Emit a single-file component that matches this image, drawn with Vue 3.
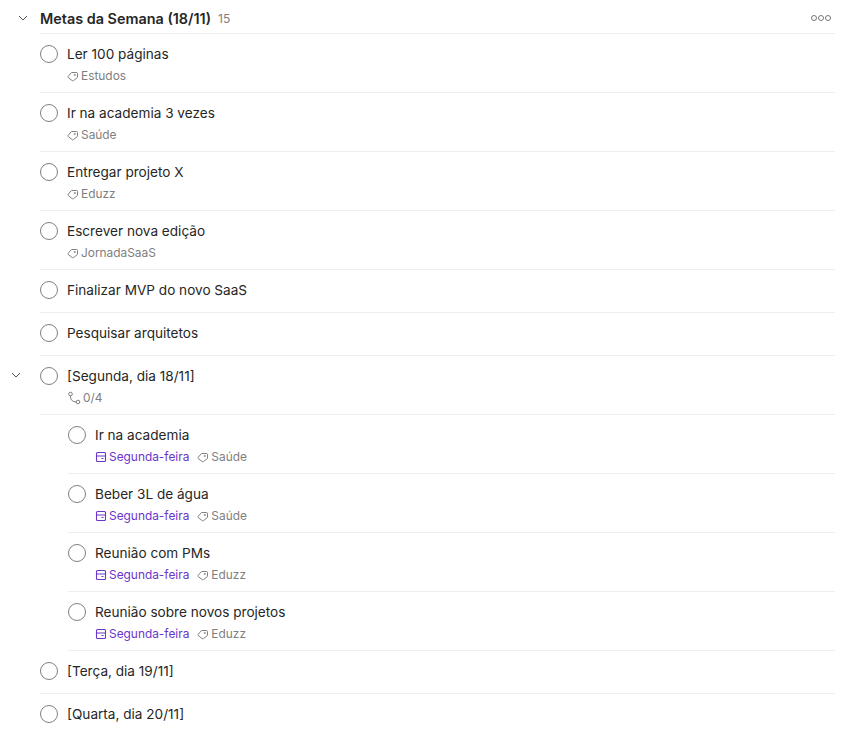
<script setup>
const tasks = [
  { title: 'Ler 100 páginas', tag: 'Estudos' },
  { title: 'Ir na academia 3 vezes', tag: 'Saúde' },
  { title: 'Entregar projeto X', tag: 'Eduzz' },
  { title: 'Escrever nova edição', tag: 'JornadaSaaS' },
  { title: 'Finalizar MVP do novo SaaS' },
  { title: 'Pesquisar arquitetos' },
  { title: '[Segunda, dia 18/11]', sub: '0/4', open: true },
  { title: 'Ir na academia', tag: 'Saúde', day: 'Segunda-feira', child: true },
  { title: 'Beber 3L de água', tag: 'Saúde', day: 'Segunda-feira', child: true },
  { title: 'Reunião com PMs', tag: 'Eduzz', day: 'Segunda-feira', child: true },
  { title: 'Reunião sobre novos projetos', tag: 'Eduzz', day: 'Segunda-feira', child: true },
  { title: '[Terça, dia 19/11]' },
  { title: '[Quarta, dia 20/11]' }
]
</script>

<template>
  <div class="page">
    <header class="head">
      <svg class="chev head-chev" width="12" height="12" viewBox="0 0 12 12"><path d="M2 4 6 8l4-4" /></svg>
      <span class="head-title">Metas da Semana (18/11)</span>
      <span class="head-count">15</span>
      <span class="more">
        <i></i><i></i><i></i>
      </span>
    </header>
    <ul class="list">
      <li v-for="t in tasks" :key="t.title" class="task" :class="{ child: t.child }">
        <svg v-if="t.open" class="chev task-chev" width="12" height="12" viewBox="0 0 12 12"><path d="M2 4 6 8l4-4" /></svg>
        <span class="check"></span>
        <div class="body">
          <div class="title">{{ t.title }}</div>
          <div v-if="t.tag || t.sub" class="meta">
            <span v-if="t.day" class="chip day">
              <svg width="12" height="12" viewBox="0 0 12 12" fill="none" stroke="currentColor" stroke-width="1.1">
                <rect x="1.5" y="1.5" width="9" height="9" rx="1" />
                <path d="M1.5 5h9M6.5 7.5h2" />
              </svg>
              {{ t.day }}
            </span>
            <span v-if="t.tag" class="chip tag">
              <svg width="12" height="12" viewBox="0 0 12 12" fill="none" stroke="currentColor" stroke-width="1">
                <path d="M1.2 6.3 4.2 2.8a1 1 0 0 1 .8-.3h4.5a1 1 0 0 1 1 1V7a1 1 0 0 1-.4.8L6.5 10.6a1 1 0 0 1-1.3 0L1.3 7.6a1 1 0 0 1-.1-1.3z" />
                <circle cx="7.8" cy="5" r=".6" />
              </svg>
              {{ t.tag }}
            </span>
            <span v-if="t.sub" class="chip sub">
              <svg width="14" height="14" viewBox="0 0 14 14" fill="none" stroke="currentColor" stroke-width="1">
                <circle cx="3.5" cy="3" r="1.8" />
                <circle cx="11" cy="11" r="1.8" />
                <path d="M3.5 4.8V6c0 3 2.5 5 5.7 5" />
              </svg>
              {{ t.sub }}
            </span>
          </div>
        </div>
      </li>
    </ul>
  </div>
</template>

<style>
html, body { margin: 0; background: #fff; }
</style>

<style scoped>
.page {
  height: 730px;
  overflow: hidden;
  padding: 0 21px 0 40px;
  font-family: Inter, "Noto Sans", sans-serif;
  color: #262626;
  background: #fff;
}
.head {
  position: relative;
  display: flex;
  align-items: center;
  box-sizing: border-box;
  height: 34px;
  padding-top: 3px;
  border-bottom: 1px solid #eee;
}
.head-title { font-size: 14.4px; font-weight: 600; }
.head-count { font-size: 12px; color: #808080; margin-left: 7px; }
.chev { fill: none; stroke: #555; stroke-width: 1; position: absolute; }
.head-chev { left: -23px; top: 12px; }
.more { margin-left: auto; margin-right: 4px; display: flex; gap: 1px; }
.more i {
  width: 6px; height: 6px; border: 1px solid #777; border-radius: 50%; box-sizing: border-box;
}
.list { list-style: none; margin: 0; padding: 0; }
.task {
  position: relative;
  display: flex;
  gap: 9px;
  padding: 10px 0 8px;
  border-bottom: 1px solid #eee;
}
.task.child { margin-left: 28px; }
.task-chev { left: -30px; top: 13px; }
.check {
  flex: none;
  width: 18px; height: 18px;
  margin-top: 1px;
  box-sizing: border-box;
  border: 1px solid #808080;
  border-radius: 50%;
}
.title { font-size: 13.6px; line-height: 20px; height: 24px; }
.meta { display: flex; gap: 8px; font-size: 11.9px; line-height: 16px; color: #808080; }
.chip { display: inline-flex; align-items: center; gap: 2px; }
.sub { gap: 2px; }
.day { color: #6b35c9; }
</style>
